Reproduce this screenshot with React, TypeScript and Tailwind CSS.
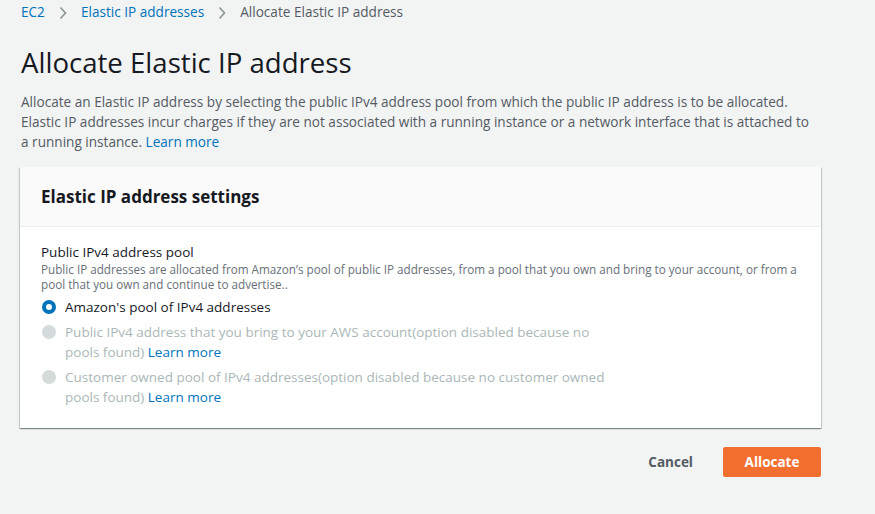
import React, { useState } from 'react';

const OPTIONS = [
  { id: 'amazon', lines: ["Amazon's pool of IPv4 addresses"], disabled: false },
  {
    id: 'byoip',
    lines: ['Public IPv4 address that you bring to your AWS account(option disabled because no', 'pools found)'],
    disabled: true,
  },
  {
    id: 'coip',
    lines: ['Customer owned pool of IPv4 addresses(option disabled because no customer owned', 'pools found)'],
    disabled: true,
  },
];

const Chevron = () => (
  <svg className="w-[10px] h-[14px] mx-[13px]" viewBox="0 0 10 14" fill="none" stroke="#879596" strokeWidth="1.6">
    <path d="M2.5 1.5l5 5.5-5 5.5" />
  </svg>
);

const App = () => {
  const [pool, setPool] = useState('amazon');

  return (
    <div
      className="min-h-screen w-[875px] h-[514px] bg-[#f2f3f3] px-[21px] text-[#16191f]"
      style={{ fontFamily: '"Open Sans", "Noto Sans", sans-serif' }}
    >
      {/* Breadcrumbs */}
      <nav className="flex items-center h-[25px] text-[13.6px]">
        <a className="text-[#0073bb]">EC2</a>
        <Chevron />
        <a className="text-[#0073bb]">Elastic IP addresses</a>
        <Chevron />
        <span className="text-[#545b64]">Allocate Elastic IP address</span>
      </nav>

      <h1 className="mt-[20px] text-[27.6px] leading-[34px] font-normal">Allocate Elastic IP address</h1>

      <p className="mt-[13px] text-[13.6px] leading-[20px] text-[#545b64]">
        Allocate an Elastic IP address by selecting the public IPv4 address pool from which the public IP address is to be allocated.
        <br />
        Elastic IP addresses incur charges if they are not associated with a running instance or a network interface that is attached to
        <br />
        a running instance. <a className="text-[#0073bb]">Learn more</a>
      </p>

      {/* Settings card */}
      <div className="mt-[15px] -ml-px w-[801px] bg-white shadow-[0_1px_1px_0_rgba(0,28,36,0.3),1px_1px_1px_0_rgba(0,28,36,0.15),-1px_1px_1px_0_rgba(0,28,36,0.15)]">
        <div className="h-[60px] bg-[#fafafa] border-b border-[#eaeded] px-[21px] flex items-center">
          <h2 className="text-[17px] font-bold">Elastic IP address settings</h2>
        </div>
        <div className="px-[21px] pt-[15px] pb-[21px]">
          <div className="text-[13.5px] leading-[20px]">Public IPv4 address pool</div>
          <div className="text-[11.7px] leading-[15px] text-[#687078]">
            Public IP addresses are allocated from Amazon’s pool of public IP addresses, from a pool that you own and bring to your account, or from a
            <br />
            pool that you own and continue to advertise..
          </div>
          <div className="mt-[5px] flex flex-col gap-[5px]">
            {OPTIONS.map((o) => (
              <label
                key={o.id}
                className={`flex items-start gap-[9px] ${o.disabled ? 'cursor-default' : 'cursor-pointer'}`}
                onClick={() => !o.disabled && setPool(o.id)}
              >
                <span className="mt-[3px] shrink-0 w-[14px] h-[14px] ml-[1px]">
                  {o.disabled ? (
                    <span className="block w-[14px] h-[14px] rounded-full bg-[#d5dbdb]" />
                  ) : pool === o.id ? (
                    <span className="block w-[14px] h-[14px] rounded-full border-[4px] border-[#0073bb] bg-white" />
                  ) : (
                    <span className="block w-[14px] h-[14px] rounded-full border-2 border-[#aab7b8] bg-white" />
                  )}
                </span>
                <span className={`flex flex-col text-[13.5px] leading-[20px] ${o.disabled ? 'text-[#aab7b8]' : 'text-[#16191f]'}`}>
                  {o.lines.map((line, i) => (
                    <span key={i} className="whitespace-nowrap">
                      {line}
                      {o.disabled && i === o.lines.length - 1 && (
                        <>
                          {' '}
                          <a className="text-[#0073bb]">Learn more</a>
                        </>
                      )}
                    </span>
                  ))}
                </span>
              </label>
            ))}
          </div>
        </div>
      </div>

      {/* Actions */}
      <div className="mt-[19px] w-[800px] flex justify-end items-center gap-[10px]">
        <button className="h-[30px] px-[20px] text-[13.5px] font-bold text-[#545b64]">Cancel</button>
        <button className="h-[30px] w-[98px] rounded-[2px] bg-[#f36f30] text-white text-[13.5px] font-bold">Allocate</button>
      </div>
    </div>
  );
};

export default App;
